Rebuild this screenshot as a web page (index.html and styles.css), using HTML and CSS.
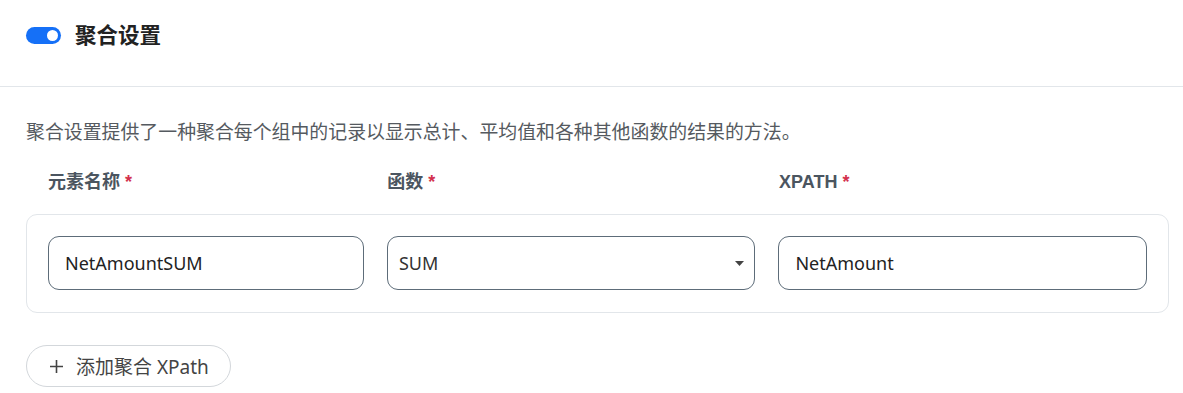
FILE: index.html
```html
<!DOCTYPE html>
<html lang="zh">
<head>
<meta charset="utf-8">
<link rel="stylesheet" href="styles.css">
</head>
<body>
<header class="header">
  <span class="toggle"><span class="knob"></span></span>
  <h1 class="title">聚合设置</h1>
</header>
<main class="content">
  <p class="desc">聚合设置提供了一种聚合每个组中的记录以显示总计、平均值和各种其他函数的结果的方法。</p>
  <div class="grid labels">
    <div class="label">元素名称 <span class="req">*</span></div>
    <div class="label">函数 <span class="req">*</span></div>
    <div class="label">XPATH <span class="req">*</span></div>
  </div>
  <div class="card">
    <div class="grid">
      <div class="field">NetAmountSUM</div>
      <div class="field select">SUM<svg class="caret" width="9" height="5" viewBox="0 0 9 5"><path d="M0 0H9L4.5 5Z" fill="#444"/></svg></div>
      <div class="field">NetAmount</div>
    </div>
  </div>
  <button class="add"><svg width="15" height="15" viewBox="0 0 15 15"><path d="M7.5 1V14M1 7.5H14" stroke="#444" stroke-width="1.6" fill="none"/></svg><span>添加聚合 XPath</span></button>
</main>
</body>
</html>
```
FILE: styles.css
```css
* { box-sizing: border-box; }
body {
  margin: 0;
  background: #fff;
  font-family: "Noto Sans", "Noto Sans CJK SC", sans-serif;
  color: #333;
}
.header {
  height: 87px;
  border-bottom: 1px solid #e2e6ea;
  display: flex;
  align-items: flex-start;
  padding: 24px 26px 0;
  gap: 14px;
}
.toggle {
  margin-top: 3px;
  width: 35px;
  height: 17px;
  border-radius: 9px;
  background: #1570f7;
  display: flex;
  align-items: center;
  justify-content: flex-end;
  padding-right: 3px;
}
.knob {
  width: 11px;
  height: 11px;
  border-radius: 50%;
  background: #fff;
}
.title {
  margin: 0;
  font-family: "Liberation Sans", "Noto Sans CJK SC", sans-serif;
  font-size: 21.5px;
  font-weight: bold;
  color: #222;
  line-height: 24px;
}
.content {
  padding: 0 14px 0 26px;
}
.desc {
  margin: 0;
  padding-top: 33px;
  font-family: "Liberation Sans", "Noto Sans CJK SC", sans-serif;
  font-size: 18.9px;
  line-height: 26px;
  color: #555a60;
}
.grid {
  display: grid;
  grid-template-columns: 6fr 7fr 7fr;
  column-gap: 23px;
}
.labels {
  padding: 0 21px 0 22px;
  margin-top: 26px;
  height: 40px;
}
.label {
  font-family: "Liberation Sans", "Noto Sans CJK SC", sans-serif;
  font-weight: bold;
  font-size: 18px;
  line-height: 20px;
  color: #4b5560;
}
.req { color: #d3304c; }
.card {
  margin-top: 2px;
  border: 1px solid #e2e6ea;
  border-radius: 11px;
  padding: 21px 21px 22px 21px;
}
.field {
  height: 54px;
  border: 1px solid #5d6c79;
  border-radius: 11px;
  display: flex;
  align-items: center;
  padding: 0 16px;
  font-size: 18px;
  color: #222;
}
.select {
  justify-content: space-between;
  padding-left: 11px;
  padding-right: 10px;
  color: #333;
}
.add {
  margin-top: 32px;
  height: 42px;
  width: 205px;
  border: 1px solid #d3d7db;
  border-radius: 21px;
  background: #fff;
  display: flex;
  align-items: center;
  padding: 0 0 0 22px;
  gap: 12px;
  font-family: "Noto Sans", "Noto Sans CJK SC", sans-serif;
  font-size: 19px;
  color: #444;
  cursor: pointer;
}
```
